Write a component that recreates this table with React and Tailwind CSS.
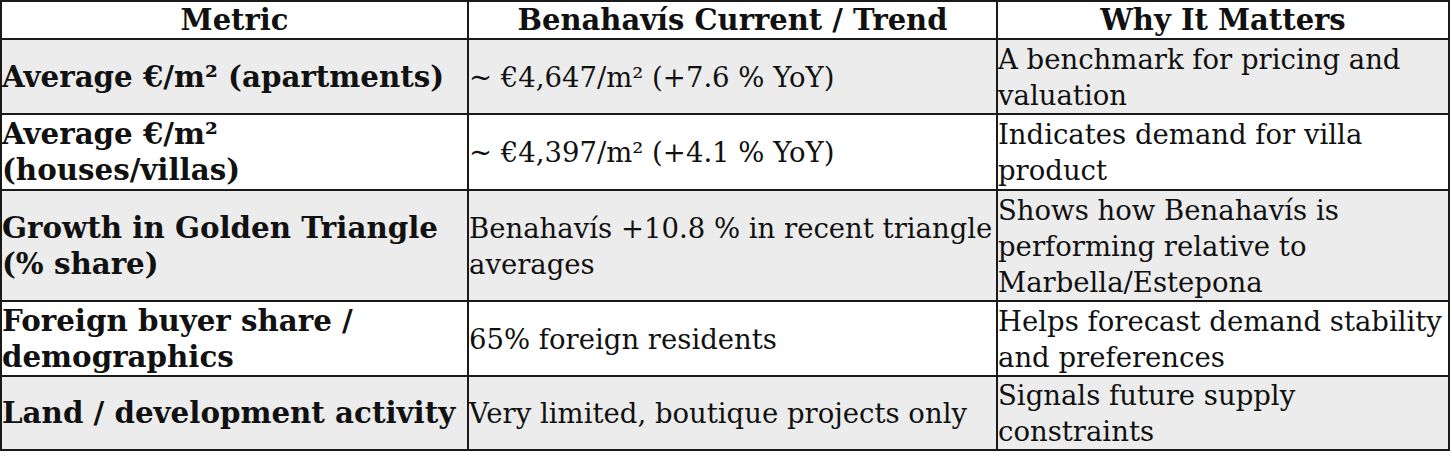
import React from "react";

const rows = [
  {
    m: ["Average €/m² (apartments)"],
    c: "~ €4,647/m² (+7.6 % YoY)",
    w: "A benchmark for pricing and valuation",
    bg: "bg-[#ececec]",
    h: "h-[75px]",
  },
  {
    m: ["Average €/m²", "(houses/villas)"],
    c: "~ €4,397/m² (+4.1 % YoY)",
    w: "Indicates demand for villa product",
    bg: "bg-white",
    h: "h-[76px]",
  },
  {
    m: ["Growth in Golden Triangle", "(% share)"],
    c: "Benahavís +10.8 % in recent triangle averages",
    w: "Shows how Benahavís is performing relative to Marbella/Estepona",
    bg: "bg-[#ececec]",
    h: "h-[111px]",
  },
  {
    m: ["Foreign buyer share /", "demographics"],
    c: "65% foreign residents",
    w: "Helps forecast demand stability and preferences",
    bg: "bg-white",
    h: "h-[75px]",
  },
  {
    m: ["Land / development activity"],
    c: "Very limited, boutique projects only",
    w: "Signals future supply constraints",
    bg: "bg-[#ececec]",
    h: "h-[74px]",
  },
];

export default function App() {
  return (
    <div className="w-[1452px] h-[456px] bg-white text-[#111] font-['DejaVu_Serif',serif]">
      <table className="table-fixed border-collapse w-[1448px] border-2 border-[#1a1a1a]">
        <colgroup>
          <col className="w-[467px]" />
          <col className="w-[529px]" />
          <col className="w-[452px]" />
        </colgroup>
        <thead>
          <tr className="h-[38px] bg-white">
            <th className="border-2 border-[#1a1a1a] px-0 py-0 text-center font-bold text-[29px] leading-[34px]">
              Metric
            </th>
            <th className="border-2 border-[#1a1a1a] px-0 py-0 text-center font-bold text-[29px] leading-[34px]">
              Benahavís Current / Trend
            </th>
            <th className="border-2 border-[#1a1a1a] px-0 py-0 text-center font-bold text-[29px] leading-[34px]">
              Why It Matters
            </th>
          </tr>
        </thead>
        <tbody>
          {rows.map((r, i) => (
            <tr key={i} className={`${r.bg} ${r.h}`}>
              <td className="border-2 border-[#1a1a1a] pl-0 pr-0 py-0 align-middle font-bold text-[29.3px] leading-[36px] whitespace-nowrap">
                {r.m.map((line, j) => (
                  <div key={j}>{line}</div>
                ))}
              </td>
              <td className="border-2 border-[#1a1a1a] px-0 py-0 align-middle text-[27.5px] leading-[36px]">
                {r.c}
              </td>
              <td className="border-2 border-[#1a1a1a] px-0 py-0 align-middle text-[27.5px] leading-[36px]">
                {r.w}
              </td>
            </tr>
          ))}
        </tbody>
      </table>
    </div>
  );
}
